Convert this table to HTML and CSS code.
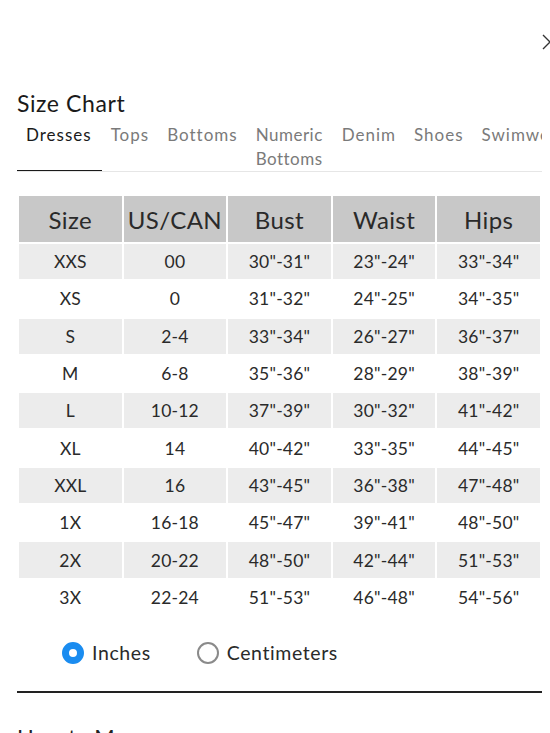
FILE: index.html
```html
<!DOCTYPE html>
<html lang="en">
<head>
<meta charset="utf-8">
<title>Size Chart</title>
<link rel="stylesheet" href="styles.css">
</head>
<body>
<div class="modal">
  <button class="close" aria-label="Next">
    <svg width="12" height="16" viewBox="0 0 12 16"><path d="M1 1 L8 8 L1 15" fill="none" stroke="#333" stroke-width="1.4"/></svg>
  </button>
  <div class="sheet">
    <h2 class="title">Size Chart</h2>
    <div class="tabs">
      <div class="tab active">Dresses</div>
      <div class="tab">Tops</div>
      <div class="tab">Bottoms</div>
      <div class="tab wrap">Numeric Bottoms</div>
      <div class="tab">Denim</div>
      <div class="tab">Shoes</div>
      <div class="tab">Swimwear</div>
    </div>
    <table class="chart">
      <thead>
        <tr><th>Size</th><th>US/CAN</th><th>Bust</th><th>Waist</th><th>Hips</th></tr>
      </thead>
      <tbody>
        <tr><td>XXS</td><td>00</td><td>30"-31"</td><td>23"-24"</td><td>33"-34"</td></tr>
        <tr><td>XS</td><td>0</td><td>31"-32"</td><td>24"-25"</td><td>34"-35"</td></tr>
        <tr><td>S</td><td>2-4</td><td>33"-34"</td><td>26"-27"</td><td>36"-37"</td></tr>
        <tr><td>M</td><td>6-8</td><td>35"-36"</td><td>28"-29"</td><td>38"-39"</td></tr>
        <tr><td>L</td><td>10-12</td><td>37"-39"</td><td>30"-32"</td><td>41"-42"</td></tr>
        <tr><td>XL</td><td>14</td><td>40"-42"</td><td>33"-35"</td><td>44"-45"</td></tr>
        <tr><td>XXL</td><td>16</td><td>43"-45"</td><td>36"-38"</td><td>47"-48"</td></tr>
        <tr><td>1X</td><td>16-18</td><td>45"-47"</td><td>39"-41"</td><td>48"-50"</td></tr>
        <tr><td>2X</td><td>20-22</td><td>48"-50"</td><td>42"-44"</td><td>51"-53"</td></tr>
        <tr><td>3X</td><td>22-24</td><td>51"-53"</td><td>46"-48"</td><td>54"-56"</td></tr>
      </tbody>
    </table>
    <div class="units">
      <label class="unit"><span class="radio checked"></span>Inches</label>
      <label class="unit"><span class="radio"></span>Centimeters</label>
    </div>
    <hr class="divider">
    <h3 class="subtitle">How to Measure</h3>
  </div>
</div>
</body>
</html>
```
FILE: styles.css
```css
* { box-sizing: border-box; }
html, body { margin: 0; padding: 0; background: #fff; overflow: hidden; }
body {
  font-family: Lato, "Noto Sans", sans-serif;
  color: #222;
  width: 550px;
  height: 733px;
}
.modal { position: relative; height: 733px; overflow: hidden; }
.close {
  position: absolute;
  top: 34px;
  left: 542px;
  border: 0;
  background: none;
  padding: 0;
  width: 12px;
  height: 16px;
  cursor: pointer;
}
.sheet { padding: 89px 8px 0 17px; }
.title {
  margin: 0;
  font-size: 23px;
  line-height: 28px;
  font-weight: 400;
  letter-spacing: 0.6px;
  color: #1a1a1a;
}
.tabs {
  display: flex;
  margin-top: 6px;
  width: 525px;
  border-bottom: 1px solid #e6e6e6;
  overflow: hidden;
  white-space: nowrap;
}
.tab {
  position: relative;
  flex: none;
  padding: 0 9px;
  font-size: 17px;
  line-height: 24px;
  color: #7a7a7a;
  letter-spacing: 1px;
}
.tab.active { color: #1a1a1a; padding-right: 10px; }
.tab.active::after {
  content: "";
  position: absolute;
  left: 0; right: 0; bottom: -1px;
  height: 2px;
  background: #1a1a1a;
}
.tab.wrap { white-space: normal; width: 86px; letter-spacing: 0.5px; }
.chart {
  margin-top: 22px;
  width: 525px;
  border-spacing: 2px;
  table-layout: fixed;
  text-align: center;
}
.chart th {
  height: 46px;
  background: #c8c8c8;
  font-size: 24px;
  font-weight: 400;
  letter-spacing: 0.4px;
  color: #2a2a2a;
  padding: 0;
}
.chart td {
  height: 35.3px;
  padding: 0;
  font-size: 17.5px;
  letter-spacing: 0.2px;
  color: #2a2a2a;
}
.chart tbody tr:nth-child(odd) td { background: #ececec; }
.units {
  display: flex;
  align-items: center;
  gap: 46px;
  margin-top: 24px;
  padding-left: 45px;
  height: 24px;
}
.unit {
  display: flex;
  align-items: center;
  gap: 8px;
  font-size: 19.5px;
  letter-spacing: 0.6px;
  color: #2a2a2a;
}
.radio {
  width: 22px;
  height: 22px;
  border-radius: 50%;
  border: 2px solid #8a8a8a;
  background: #fff;
}
.radio.checked {
  border: 7px solid #1a8cf0;
  background: #fff;
}
.divider {
  margin: 26px 0 0;
  width: 525px;
  border: 0;
  height: 2px;
  background: #222;
}
.subtitle {
  margin: 30px 0 0;
  font-size: 22px;
  line-height: 28px;
  font-weight: 400;
}
```
